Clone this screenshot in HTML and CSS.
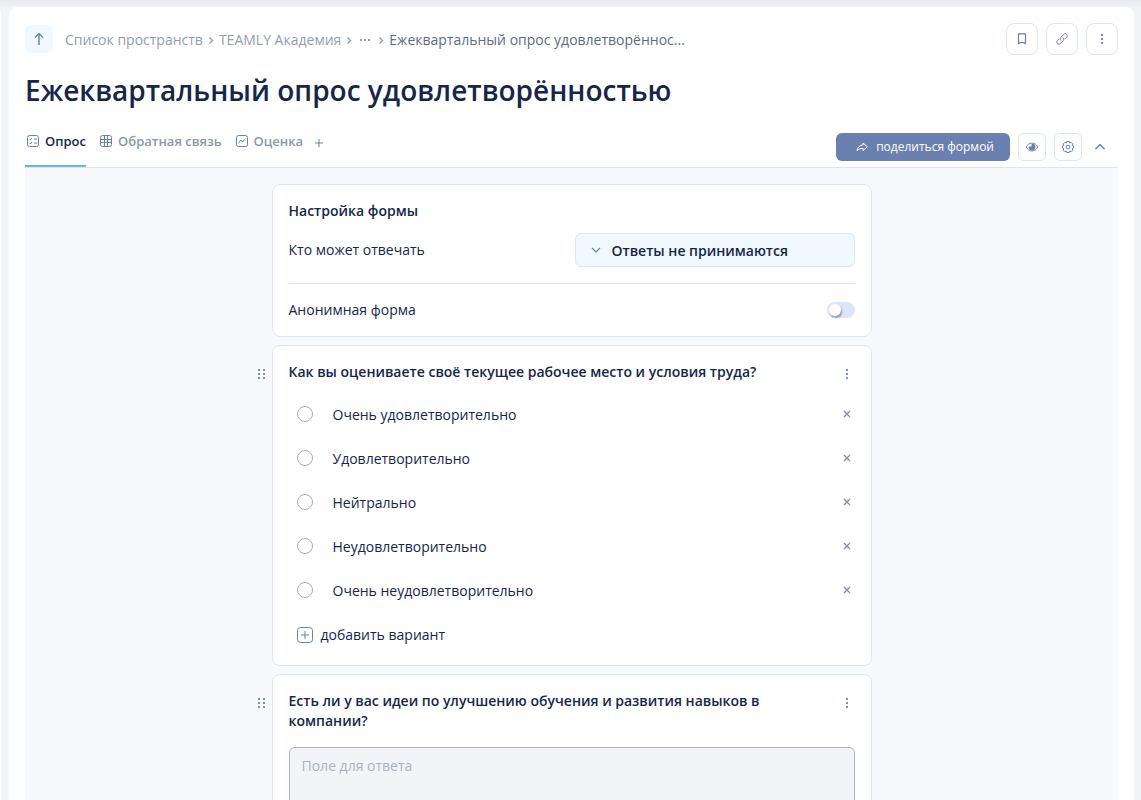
FILE: index.html
```html
<!DOCTYPE html>
<html lang="ru">
<head>
<meta charset="utf-8">
<meta name="viewport" content="width=device-width, initial-scale=1">
<title>Ежеквартальный опрос удовлетворённостью</title>
<link rel="stylesheet" href="styles.css">
</head>
<body>
<svg class="sprite" aria-hidden="true">
  <symbol id="grip" viewBox="0 0 8 10"><path d="M0 0h2v2H0zM5 0h2v2H5zM0 4h2v2H0zM5 4h2v2H5zM0 8h2v2H0zM5 8h2v2H5z" fill="currentColor" stroke="none"/></symbol>
  <symbol id="dots" viewBox="0 0 16 16"><path d="M7 3h2v2H7zM7 7h2v2H7zM7 11h2v2H7z" fill="currentColor" stroke="none"/></symbol>
  <symbol id="cross" viewBox="0 0 16 16"><path stroke-width="1.400" d="M5 5l6 6M11 5l-6 6"/></symbol>
  <symbol id="sep" viewBox="0 0 8 10"><path stroke-width="1.400" d="M2.500 2.500l3 3-3 3"/></symbol>
</svg>
<div class="app">
  <aside class="sidebar-edge"></aside>
  <main class="panel">
    <header class="topbar">
      <button class="up-button" aria-label="Вверх"><svg class="icon" viewBox="0 0 16 16"><path stroke-width="1.400" d="M8 14V3M4 6.500l4-4 4 4"/></svg></button>
      <nav class="crumbs">
        <a href="#">Список пространств</a>
        <svg class="sep"><use href="#sep"/></svg>
        <a href="#">TEAMLY Академия</a>
        <svg class="sep"><use href="#sep"/></svg>
        <button class="crumb-more" aria-label="Ещё"><svg viewBox="0 0 12 4"><path d="M1 1h2v2H1zM5 1h2v2H5zM9 1h2v2H9z" fill="currentColor"/></svg></button>
        <svg class="sep"><use href="#sep"/></svg>
        <a class="crumb-current" href="#">Ежеквартальный опрос удовлетворённос...</a>
      </nav>
      <div class="page-actions">
        <button class="square-button large" aria-label="В закладки"><svg class="icon" viewBox="0 0 16 16"><path stroke-width="1.200" d="M4.500 2.800h7v10l-2-1.300h-3l-2 1.300z"/></svg></button>
        <button class="square-button large" aria-label="Копировать ссылку"><svg class="icon" viewBox="0 0 16 16"><path d="M7 9.500c-1-1-1-2.400 0-3.400l2.600-2.600c1-1 2.300-1 3.100-.2s.8 2.100-.2 3.100l-1.700 1.700M9 6.500c1 1 1 2.400 0 3.400l-2.600 2.600c-1 1-2.300 1-3.100.2s-.8-2.100.2-3.100l1.700-1.700"/></svg></button>
        <button class="square-button large" aria-label="Меню"><svg class="icon dots"><use href="#dots"/></svg></button>
      </div>
    </header>
    <h1 class="title">Ежеквартальный опрос удовлетворённостью</h1>
    <div class="toolbar">
      <nav class="tabs">
        <a class="tab active" href="#"><svg class="icon" viewBox="0 0 16 16"><rect x="2.500" y="2.500" width="11" height="11" rx="2"/><path d="M4.500 6l1 1 1.500-2M4.500 10l1 1 1.500-2M9 6h3M9 10h3"/></svg>Опрос</a>
        <a class="tab" href="#"><svg class="icon" viewBox="0 0 16 16"><rect x="2.500" y="2.500" width="11" height="11" rx="2"/><path d="M6.500 2.500v11M9.500 2.500v11M2.500 6.500h11M2.500 9.500h11"/></svg>Обратная связь</a>
        <a class="tab" href="#"><svg class="icon" viewBox="0 0 16 16"><rect x="2.500" y="2.500" width="11" height="11" rx="2"/><path d="M4.500 10l2.300-2.800 2 1.500L11.500 6"/></svg>Оценка</a>
        <button class="tab-add" aria-label="Добавить вкладку"><svg viewBox="0 0 8 8"><path d="M4 0v8M0 4h8"/></svg></button>
      </nav>
      <div class="form-actions">
        <button class="share"><svg class="share-icon" viewBox="0 0 12 12"><path d="M7 4V2l4.300 3.700L7 9.500v-2C4.300 7.300 2.500 8 1 9.800 1.300 6.500 3.500 4.200 7 4z"/></svg>поделиться формой</button>
        <button class="square-button" aria-label="Просмотр"><svg class="icon" viewBox="0 0 16 16"><path d="M2.300 8c1.300-2.600 3.200-3.900 5.700-3.900s4.400 1.300 5.700 3.900c-1.300 2.600-3.200 3.900-5.700 3.900S3.600 10.600 2.300 8z"/><path d="M8 5v3H5a3 3 0 1 0 3-3z" fill="currentColor"/></svg></button>
        <button class="square-button" aria-label="Настройки"><svg class="icon" viewBox="0 0 16 16"><circle cx="8" cy="8" r="1.900"/><path d="M6.700 2.500h2.600l.4 1.500 1.500-.6 1.500 1.500-.6 1.500 1.400.6v2l-1.400.6.6 1.500-1.500 1.500-1.500-.6-.4 1.500H6.700L6.300 12l-1.500.6-1.500-1.500.6-1.500L2.500 9V7l1.400-.6-.6-1.500 1.500-1.500 1.500.6z"/></svg></button>
        <button class="collapse" aria-label="Свернуть"><svg class="icon" viewBox="0 0 16 16"><path stroke-width="1.500" d="M3.500 10L8 5.500l4.500 4.500"/></svg></button>
      </div>
    </div>
    <section class="canvas">
      <div class="block">
        <div class="card settings">
          <h2 class="card-title">Настройка формы</h2>
          <div class="setting">
            <label for="audience">Кто может отвечать</label>
            <div class="select-box">
              <svg class="select-arrow" viewBox="0 0 10 6"><path stroke-width="1.200" d="M1 1l4 4 4-4"/></svg>
              <select id="audience"><option>Ответы не принимаются</option></select>
            </div>
          </div>
          <hr>
          <div class="setting">
            <label for="anonymous">Анонимная форма</label>
            <input class="switch" id="anonymous" type="checkbox">
          </div>
        </div>
      </div>
      <div class="block">
        <button class="grip" aria-label="Переместить"><svg><use href="#grip"/></svg></button>
        <div class="card choices">
          <div class="question-head">
            <h2 class="card-title">Как вы оцениваете своё текущее рабочее место и условия труда?</h2>
            <button class="icon-button" aria-label="Меню вопроса"><svg class="icon dots"><use href="#dots"/></svg></button>
          </div>
          <div class="option"><input type="radio" name="place" id="o1"><label for="o1">Очень удовлетворительно</label><button class="icon-button remove" aria-label="Удалить"><svg class="icon"><use href="#cross"/></svg></button></div>
          <div class="option"><input type="radio" name="place" id="o2"><label for="o2">Удовлетворительно</label><button class="icon-button remove" aria-label="Удалить"><svg class="icon"><use href="#cross"/></svg></button></div>
          <div class="option"><input type="radio" name="place" id="o3"><label for="o3">Нейтрально</label><button class="icon-button remove" aria-label="Удалить"><svg class="icon"><use href="#cross"/></svg></button></div>
          <div class="option"><input type="radio" name="place" id="o4"><label for="o4">Неудовлетворительно</label><button class="icon-button remove" aria-label="Удалить"><svg class="icon"><use href="#cross"/></svg></button></div>
          <div class="option"><input type="radio" name="place" id="o5"><label for="o5">Очень неудовлетворительно</label><button class="icon-button remove" aria-label="Удалить"><svg class="icon"><use href="#cross"/></svg></button></div>
          <button class="add-option"><svg class="icon" viewBox="0 0 16 16"><rect x=".5" y=".5" width="15" height="15" rx="3"/><path d="M8 4v8M4 8h8"/></svg>добавить вариант</button>
        </div>
      </div>
      <div class="block">
        <button class="grip" aria-label="Переместить"><svg><use href="#grip"/></svg></button>
        <div class="card">
          <div class="question-head">
            <h2 class="card-title" id="ideas-title">Есть ли у вас идеи по улучшению обучения и развития навыков в компании?</h2>
            <button class="icon-button" aria-label="Меню вопроса"><svg class="icon dots"><use href="#dots"/></svg></button>
          </div>
          <textarea class="answer" aria-labelledby="ideas-title" placeholder="Поле для ответа"></textarea>
        </div>
      </div>
    </section>
  </main>
</div>
</body>
</html>
```
FILE: styles.css
```css
* { box-sizing: border-box; }
body {
  margin: 0;
  background: #f3f4f8;
  color: #172648;
  font: 14px/20px "Open Sans", "Noto Sans", sans-serif;
}
button, select, textarea, input { margin: 0; font: inherit; color: inherit; }
button { padding: 0; border: 0; background: none; cursor: pointer; }
h1, h2 { margin: 0; }
a { color: inherit; text-decoration: none; }
svg { display: block; flex: none; fill: none; stroke: currentColor; }
.sprite { position: absolute; width: 0; height: 0; }
.icon { width: 16px; height: 16px; stroke-linejoin: round; }
.dots { opacity: .85; }

.app {
  display: flex;
  gap: 8px;
  height: 100vh;
  padding: 7px 7px 0 0;
  background: linear-gradient(#e8e9ed, #f1f2f6 7px, #f3f4f8 8px);
}
.sidebar-edge { width: 1px; margin-top: 4px; background: #fff; }
.panel {
  display: flex;
  flex: 1;
  flex-direction: column;
  min-width: 0;
  padding: 16px 16px 0;
  border-radius: 8px 8px 0 0;
  background: #fff;
}

.topbar { display: flex; align-items: center; gap: 12px; color: #6a80ae; }
.up-button {
  display: grid;
  place-items: center;
  width: 28px;
  height: 28px;
  border-radius: 6px;
  background: #f0f9ff;
}
.crumbs { display: flex; flex: 1; align-items: center; gap: 4px; min-width: 0; padding-top: 2px; color: #949eab; white-space: nowrap; }
.sep { width: 8px; height: 10px; }
.crumb-more { padding: 4px 2px; color: #949eab; }
.crumb-more svg { width: 12px; height: 4px; stroke: none; }
.crumb-current { overflow: hidden; color: #5f6b7f; text-overflow: ellipsis; }
.page-actions { display: flex; gap: 8px; }
.square-button {
  display: grid;
  place-items: center;
  width: 28px;
  height: 28px;
  border: 1px solid #dce6f6;
  border-radius: 6px;
  color: #6a80ae;
}
.square-button.large { width: 32px; height: 32px; border-radius: 8px; }

.title { padding: 16px 0 18px; font-size: 28px; font-weight: 600; line-height: 38px; }

.toolbar {
  display: flex;
  justify-content: space-between;
  padding-top: 6px;
  border-bottom: 1px solid #dce6f2;
}
.tabs { display: flex; gap: 12px; }
.tab {
  display: flex;
  align-items: flex-start;
  gap: 4px;
  padding-bottom: 16px;
  border-bottom: 2px solid transparent;
  color: #8c99a4;
  font-size: 13px;
  font-weight: 600;
  line-height: 16px;
}
.tab .icon { color: #6a80ae; }
.tab.active { border-color: #66b8dc; color: #172648; }
.tab-add { align-self: flex-start; padding: 6px 0; color: #6a80ae; }
.tab-add svg { width: 8px; height: 8px; }
.form-actions { display: flex; gap: 8px; padding-bottom: 6px; }
.share {
  display: flex;
  align-items: center;
  gap: 8px;
  padding: 0 16px 0 20px;
  border-radius: 6px;
  background: #6a80ae;
  color: #fff;
  font-size: 12px;
  font-weight: 500;
}
.share-icon { width: 12px; height: 12px; }
.collapse { display: grid; place-items: center; width: 20px; height: 28px; margin-right: 8px; color: #6a80ae; }

.canvas {
  display: flex;
  flex: 1;
  flex-direction: column;
  gap: 8px;
  align-items: center;
  min-height: 0;
  padding: 16px 0;
  overflow-y: auto;
  background: #f7f9fd;
  scrollbar-width: none;
}
.block {
  display: grid;
  flex: none;
  grid-template-columns: 16px minmax(0, 1fr) 16px;
  width: 100%;
  max-width: 632px;
}
.card {
  grid-column: 2;
  padding: 16px;
  border: 1px solid #dce6f6;
  border-radius: 8px;
  background: #fff;
}
.card-title { font-size: 14px; font-weight: 600; line-height: 20px; }
.grip { align-self: start; justify-self: end; height: 22px; margin-top: 18px; padding-right: 6px; color: #6a80ae; }
.grip svg { width: 8px; height: 10px; opacity: .85; }
.setting { display: flex; align-items: center; justify-content: space-between; }
.settings .card-title { margin-bottom: 12px; }
.settings hr { height: 1px; margin: 16px 0; border: 0; background: #dce6f6; }
.select-box { position: relative; width: 280px; color: #6a80ae; }
.select-arrow { position: absolute; top: 14px; left: 16px; width: 10px; height: 6px; }
.select-box select {
  appearance: none;
  width: 100%;
  height: 34px;
  padding: 1px 36px 0;
  border: 1px solid #dce6f6;
  border-radius: 6px;
  background: #f0f9ff;
  color: #172648;
  font-weight: 600;
}
.switch {
  appearance: none;
  display: flex;
  align-items: center;
  width: 28px;
  height: 16px;
  padding: 2px;
  border-radius: 8px;
  background: #dce6f6;
}
.switch::before {
  content: "";
  width: 12px;
  height: 12px;
  border-radius: 50%;
  background: #fff;
  box-shadow: 1px 2px 2px #172b4d66;
}
.switch:checked { justify-content: flex-end; background: #6a80ae; }

.question-head { display: flex; gap: 24px; justify-content: space-between; }
.icon-button { align-self: flex-start; padding: 4px 0; color: #6a80ae; }
.choices { padding-bottom: 9px; }
.choices .question-head { height: 30px; }
.option { display: flex; align-items: center; height: 44px; padding-left: 8px; }
.option input {
  appearance: none;
  width: 16px;
  height: 16px;
  margin-right: 20px;
  border: 1px solid #a9adb5;
  border-radius: 50%;
}
.option input:checked { border: 5px solid #6a80ae; }
.option label { flex: 1; padding-top: 2px; }
.remove { align-self: center; color: #8791a5; }
.add-option { display: flex; align-items: center; gap: 8px; height: 44px; padding: 2px 0 0 8px; }
.add-option .icon { color: #6a80ae; }
.answer {
  display: block;
  width: 100%;
  height: 100px;
  margin-top: 16px;
  padding: 8px 12px;
  border: 1px solid #b1b4bb;
  border-radius: 6px;
  background: #f3f4f8;
  resize: none;
}
.answer::placeholder { color: #abb2be; opacity: 1; }
```
